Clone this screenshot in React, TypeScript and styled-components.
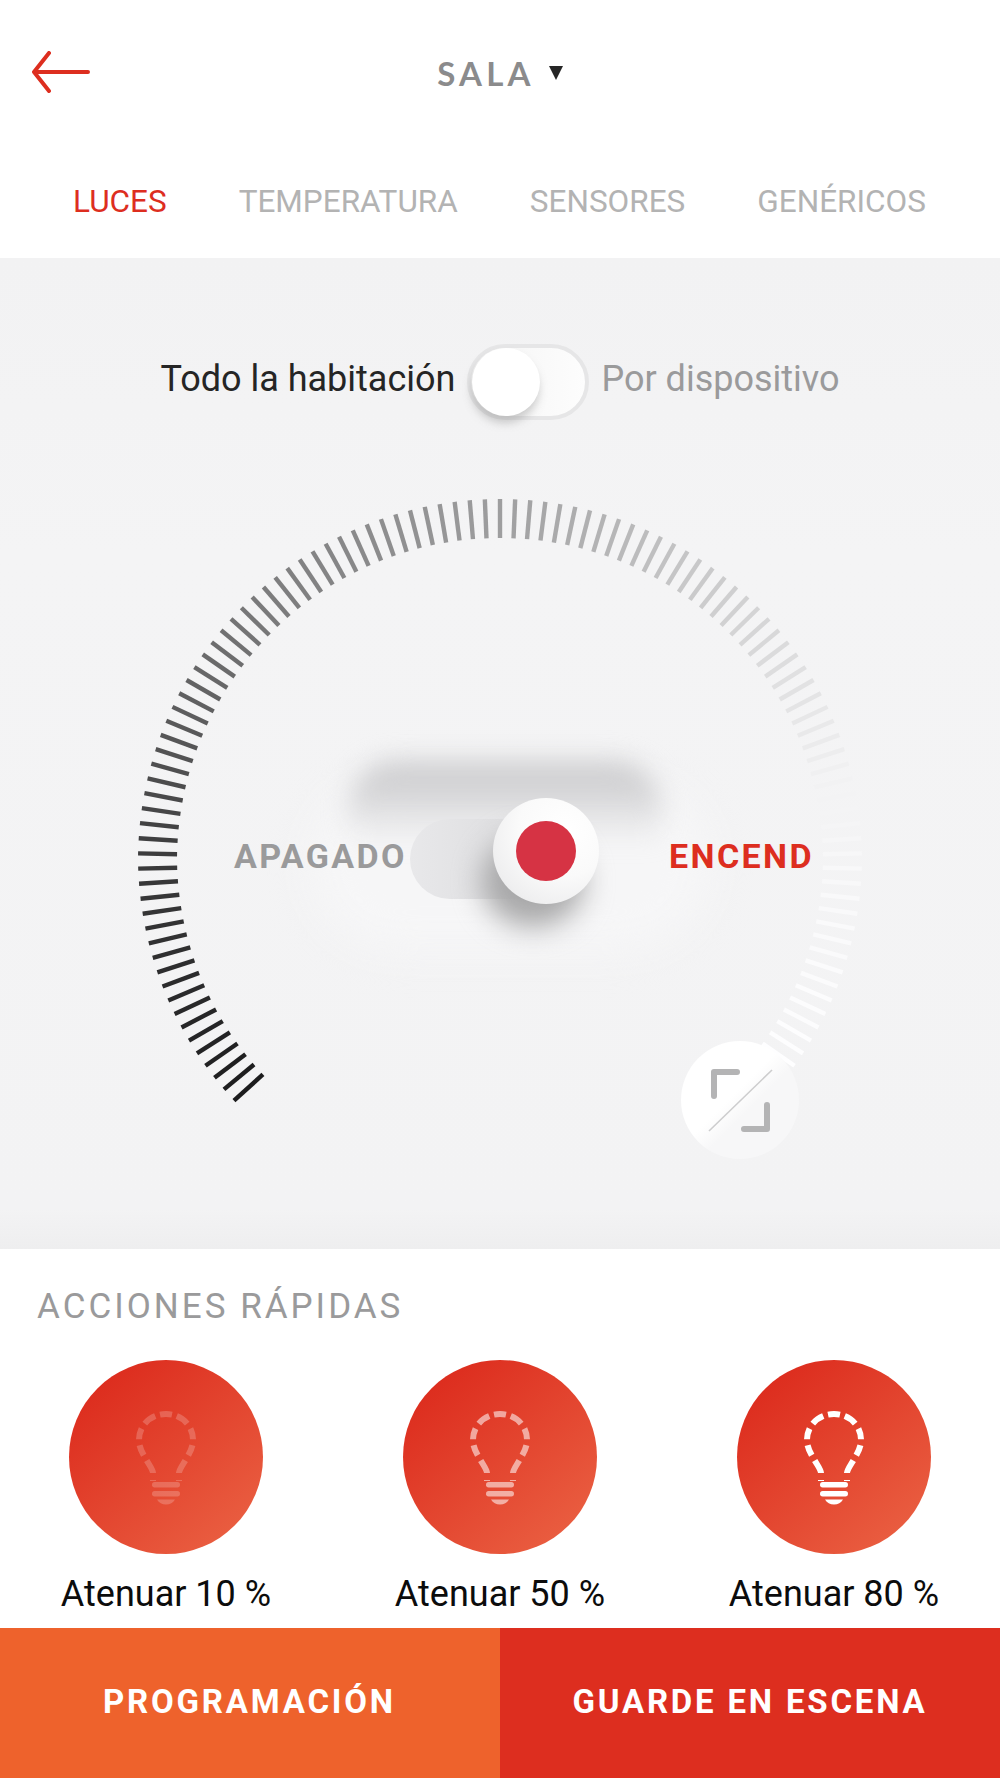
import React from 'react'
import styled, { createGlobalStyle } from 'styled-components'

const GlobalStyle = createGlobalStyle`
  html, body {
    margin: 0;
    padding: 0;
    background: #fff;
    font-family: Roboto, "Liberation Sans", sans-serif;
  }
`

const TICK_COUNT = 111
const START_ANGLE = -132
const END_ANGLE = 132
const OUTER = 362
const INNER = 323
const CX = 400
const CY = 391

const tickStops: [number, number][] = [
  [-132, 28],
  [-90, 58],
  [-45, 120],
  [0, 158],
  [30, 196],
  [60, 226],
  [78, 243],
  [92, 248],
  [132, 255]
]

const tickShade = (angle: number) => {
  for (let i = 1; i < tickStops.length; i++) {
    const [a0, v0] = tickStops[i - 1]
    const [a1, v1] = tickStops[i]
    if (angle <= a1) {
      return Math.round(v0 + ((angle - a0) / (a1 - a0)) * (v1 - v0))
    }
  }
  return 255
}

const ticks = Array.from({ length: TICK_COUNT }, (_, i) => {
  const angle = START_ANGLE + (i * (END_ANGLE - START_ANGLE)) / (TICK_COUNT - 1)
  const rad = (angle * Math.PI) / 180
  const shade = tickShade(angle)
  // the ring tightens a little below the horizontal
  const squeeze = (Math.max(0, Math.abs(angle) - 90) / 42) * 4
  return {
    x1: CX + (INNER - squeeze) * Math.sin(rad),
    y1: CY - (INNER - squeeze) * Math.cos(rad),
    x2: CX + (OUTER - squeeze) * Math.sin(rad),
    y2: CY - (OUTER - squeeze) * Math.cos(rad),
    color: `rgb(${shade},${shade},${Math.min(shade + 1, 255)})`
  }
})

const BackArrow = () => (
  <svg width="60" height="42" viewBox="0 0 60 42" fill="none">
    <path
      d="M57 21 H4 M18 2 L3 21 L18 40"
      stroke="#DD2E1F"
      strokeWidth="4"
      strokeLinecap="round"
      strokeLinejoin="round"
    />
  </svg>
)

const Bulb = ({ level }: { level: number }) => (
  <BulbSvg viewBox="0 0 64 94" fill="none" $level={level}>
    <path
      d="M32 3 C47 3 59 14 59 29 C59 37 55 43 51 50 C48 55 45 59 45 62 V70"
      stroke="#fff"
      strokeWidth="6"
      strokeDasharray="6 5 13 6 11 6 11 6 14 7 8"
    />
    <path
      d="M32 3 C17 3 5 14 5 29 C5 37 9 43 13 50 C16 55 19 59 19 62 V70"
      stroke="#fff"
      strokeWidth="6"
      strokeDasharray="6 5 13 6 11 6 11 6 14 7 8"
    />
    <rect x="18" y="71" width="28" height="5.5" rx="2.7" fill="#fff" />
    <rect x="18" y="80" width="28" height="5.5" rx="2.7" fill="#fff" />
    <path d="M23 88.5 H41 C39 92 36 93.5 32 93.5 C28 93.5 25 92 23 88.5 Z" fill="#fff" />
  </BulbSvg>
)

const actions = [
  { label: 'Atenuar 10 %', level: 0.2 },
  { label: 'Atenuar 50 %', level: 0.55 },
  { label: 'Atenuar 80 %', level: 1 }
]

const App = () => (
  <>
    <GlobalStyle />
    <Page>
      <Header>
        <BackButton>
          <BackArrow />
        </BackButton>
        <RoomTitle>SALA</RoomTitle>
        <RoomCaret />
      </Header>

      <Tabs>
        <Tab $active>LUCES</Tab>
        <Tab>TEMPERATURA</Tab>
        <Tab>SENSORES</Tab>
        <Tab>GENÉRICOS</Tab>
      </Tabs>

      <Panel>
        <ModeRow>
          <ModeLabel $active>Todo la habitación</ModeLabel>
          <ModeSwitch>
            <ModeKnob />
          </ModeSwitch>
          <ModeLabel>Por dispositivo</ModeLabel>
        </ModeRow>

        <Dial>
          <DialSvg width="800" height="720" viewBox="0 0 800 720">
            {ticks.map((t, i) => (
              <line
                key={i}
                x1={t.x1}
                y1={t.y1}
                x2={t.x2}
                y2={t.y2}
                stroke={t.color}
                strokeWidth="4.4"
              />
            ))}
          </DialSvg>

          <PowerRow>
            <PowerSwitch>
              <SwitchGlow />
              <SwitchShadow />
              <SwitchTrack />
              <SwitchKnobShadow />
              <SwitchKnob>
                <SwitchDot />
              </SwitchKnob>
            </PowerSwitch>
            <PowerLabel>APAGADO</PowerLabel>
            <PowerLabel $on>ENCEND</PowerLabel>
          </PowerRow>

          <ExpandButton>
            <svg width="118" height="118" viewBox="0 0 118 118" fill="none">
              <path d="M28 90 L91 29" stroke="#cdcdce" strokeWidth="1.6" />
              <path
                d="M33 55 V31 H56 M86 64 V88 H63"
                stroke="#b4b4b5"
                strokeWidth="6"
                strokeLinecap="round"
                strokeLinejoin="round"
              />
            </svg>
          </ExpandButton>
        </Dial>
      </Panel>

      <QuickActions>
        <SectionTitle>ACCIONES RÁPIDAS</SectionTitle>
        <ActionGrid>
          {actions.map(({ label, level }) => (
            <Action key={label}>
              <ActionCircle>
                <Bulb level={level} />
              </ActionCircle>
              <ActionLabel>{label}</ActionLabel>
            </Action>
          ))}
        </ActionGrid>
      </QuickActions>

      <Footer>
        <FooterButton $tone="orange">PROGRAMACIÓN</FooterButton>
        <FooterButton $tone="red">GUARDE EN ESCENA</FooterButton>
      </Footer>
    </Page>
  </>
)

const Page = styled.div`
  width: 1000px;
  height: 1778px;
  display: flex;
  flex-direction: column;
  overflow: hidden;
  background: #fff;
`

const Header = styled.header`
  position: relative;
  height: 146px;
  display: flex;
  align-items: center;
  justify-content: center;
  gap: 14px;
  flex: none;
`

const BackButton = styled.div`
  position: absolute;
  left: 31px;
  top: 51px;
  line-height: 0;
`

const RoomTitle = styled.span`
  font-family: Lato, Inter, sans-serif;
  font-size: 33px;
  font-weight: 700;
  letter-spacing: 4.2px;
  color: #8b8b8c;
`

const RoomCaret = styled.span`
  width: 0;
  height: 0;
  border-left: 7px solid transparent;
  border-right: 7px solid transparent;
  border-top: 14px solid #262626;
`

const Tabs = styled.nav`
  height: 112px;
  flex: none;
  display: flex;
  align-items: flex-start;
  padding: 37px 0 0 73px;
  gap: 72px;
  box-sizing: border-box;
`

const Tab = styled.span<{ $active?: boolean }>`
  font-size: 31.5px;
  line-height: 38px;
  color: ${({ $active }) => ($active ? '#DD2E1F' : '#b3b3b3')};
`

const Panel = styled.section`
  height: 991px;
  flex: none;
  display: flex;
  flex-direction: column;
  background: linear-gradient(#f2f2f3 0, #f4f4f5 30%, #f3f3f4 96%, #eeeeef 100%);
`

const ModeRow = styled.div`
  height: 212px;
  flex: none;
  display: flex;
  align-items: flex-start;
  justify-content: center;
  gap: 12px;
  padding-top: 86px;
  box-sizing: border-box;
`

const ModeLabel = styled.span<{ $active?: boolean }>`
  font-size: 36px;
  line-height: 68px;
  margin-top: 1px;
  color: ${({ $active }) => ($active ? '#252525' : '#9a9a9b')};
`

const ModeSwitch = styled.div`
  position: relative;
  width: 122px;
  height: 76px;
  box-sizing: border-box;
  border: 4px solid #e6e6e7;
  border-radius: 38px;
  background: linear-gradient(90deg, #f4f4f4, #fdfdfd);
`

const ModeKnob = styled.div`
  position: absolute;
  left: 1px;
  top: 0;
  width: 68px;
  height: 68px;
  border-radius: 50%;
  background: #fff;
  box-shadow: -1px 7px 9px rgba(120, 120, 120, 0.35);
`

const Dial = styled.div`
  position: relative;
  flex: 1;
  display: flex;
  justify-content: center;
`

const DialSvg = styled.svg`
  position: absolute;
  left: 100px;
  top: 0;
`

const PowerRow = styled.div`
  position: absolute;
  left: 0;
  right: 0;
  top: 349px;
  height: 80px;
`

const PowerLabel = styled.span<{ $on?: boolean }>`
  position: absolute;
  top: 16px;
  left: ${({ $on }) => ($on ? '669px' : '234px')};
  font-size: 34px;
  line-height: 42px;
  font-weight: 700;
  letter-spacing: 2.4px;
  color: ${({ $on }) => ($on ? '#DD2E1F' : '#9a9a9b')};
`

const PowerSwitch = styled.div`
  position: absolute;
  left: 410px;
  top: 0;
  width: 190px;
  height: 80px;
`

const SwitchGlow = styled.div`
  position: absolute;
  left: -100px;
  top: -40px;
  width: 400px;
  height: 170px;
  border-radius: 85px;
  background: #f6f6f7;
  filter: blur(20px);
`

const SwitchShadow = styled.div`
  position: absolute;
  left: -62px;
  top: -58px;
  width: 314px;
  height: 96px;
  border-radius: 48px 48px 30px 30px;
  background: linear-gradient(#cbcbcd, #d4d4d6 30%, rgba(244, 244, 245, 0) 85%);
  filter: blur(12px);
`

const SwitchTrack = styled.div`
  position: absolute;
  left: 0;
  top: 0;
  width: 180px;
  height: 80px;
  border-radius: 40px;
  background: linear-gradient(90deg, #e8e8ea, #d6d6d8);
`

const SwitchKnobShadow = styled.div`
  position: absolute;
  left: 72px;
  top: 16px;
  width: 102px;
  height: 92px;
  border-radius: 50%;
  background: #a8a8a9;
  filter: blur(14px);
`

const SwitchKnob = styled.div`
  position: absolute;
  left: 83px;
  top: -21px;
  width: 106px;
  height: 106px;
  display: flex;
  align-items: center;
  justify-content: center;
  border-radius: 50%;
  background: radial-gradient(circle at 68% 30%, #ffffff 0, #fafafa 45%, #efeff0 75%, #e2e2e3 100%);
`

const SwitchDot = styled.div`
  width: 60px;
  height: 60px;
  border-radius: 50%;
  background: #D63344;
`

const ExpandButton = styled.div`
  position: absolute;
  left: 681px;
  top: 571px;
  width: 118px;
  height: 118px;
  line-height: 0;
  border-radius: 50%;
  background: linear-gradient(135deg, #ffffff 45%, #f7f7f8 58%);
`

const QuickActions = styled.section`
  height: 379px;
  flex: none;
  box-sizing: border-box;
  padding-top: 38px;
`

const SectionTitle = styled.h2`
  margin: 0 0 33px 37px;
  font-size: 35px;
  line-height: 40px;
  font-weight: 400;
  letter-spacing: 3px;
  color: #9a9a9b;
`

const ActionGrid = styled.div`
  display: grid;
  grid-template-columns: 332px 336px 332px;
`

const Action = styled.div`
  display: flex;
  flex-direction: column;
  align-items: center;
  gap: 20px;
`

const ActionCircle = styled.div`
  width: 194px;
  height: 194px;
  display: flex;
  align-items: center;
  justify-content: center;
  border-radius: 50%;
  background: linear-gradient(140deg, #DD2E1F 15%, #ea6042 92%);
`

const BulbSvg = styled.svg<{ $level: number }>`
  width: 64px;
  height: 94px;
  margin-top: 2px;
  opacity: ${({ $level }) => $level};
`

const ActionLabel = styled.span`
  font-size: 36px;
  line-height: 40px;
  color: #0c0c0c;
`

const Footer = styled.footer`
  height: 150px;
  flex: none;
  display: grid;
  grid-template-columns: 500px 500px;
`

const FooterButton = styled.div<{ $tone: 'orange' | 'red' }>`
  display: flex;
  align-items: center;
  justify-content: ${({ $tone }) => ($tone === 'orange' ? 'flex-start' : 'center')};
  padding-left: ${({ $tone }) => ($tone === 'orange' ? '103px' : '0')};
  padding-bottom: 4px;
  box-sizing: border-box;
  font-size: 33px;
  font-weight: 700;
  letter-spacing: 2.8px;
  color: #fff;
  background: ${({ $tone }) => ($tone === 'orange' ? '#EE622C' : '#DD2E1F')};
`

export default App
